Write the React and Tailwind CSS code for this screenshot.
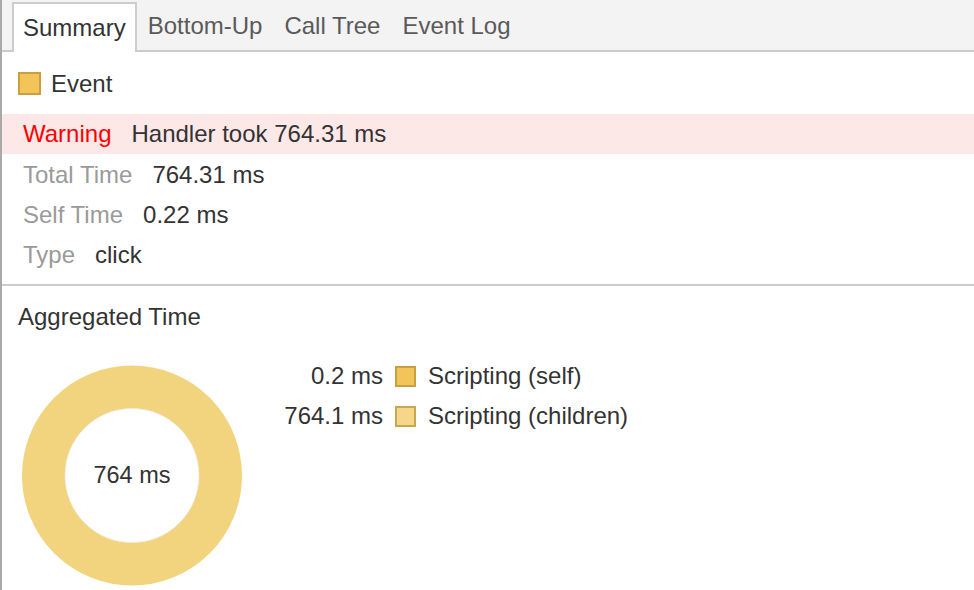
import React from "react";

const tabs = ["Summary", "Bottom-Up", "Call Tree", "Event Log"];

const details = [
  { label: "Total Time", value: "764.31 ms" },
  { label: "Self Time", value: "0.22 ms" },
  { label: "Type", value: "click" },
];

const legend = [
  { value: "0.2 ms", name: "Scripting (self)", fill: "bg-[#f2c45a]", border: "border-[#c9a03f]" },
  { value: "764.1 ms", name: "Scripting (children)", fill: "bg-[#f4d78a]", border: "border-[#c9a74e]" },
];

const Donut = () => (
  <svg width="220" height="221" viewBox="0 0 220 221" className="block">
    <circle cx="110" cy="110.5" r="88.5" fill="none" stroke="#f2d37e" strokeWidth="43" />
    <circle cx="110" cy="110.5" r="67" fill="#fff" stroke="#e8e2d0" strokeWidth="0.6" />
    <text
      x="110"
      y="112"
      textAnchor="middle"
      dominantBaseline="middle"
      fontSize="23.5"
      fill="#333"
      fontFamily="'Liberation Sans', Arial, sans-serif"
    >
      764 ms
    </text>
  </svg>
);

const App = () => {
  return (
    <div className="w-[974px] h-[590px] overflow-hidden bg-white border-l-2 border-[#a9a9a9] font-['Liberation_Sans',Arial,sans-serif] text-[24px] text-[#333]">
      {/* tab strip */}
      <div className="h-[52px] bg-[#f3f3f3] border-b-2 border-[#cbcbcb] flex items-end pl-[10px]">
        {tabs.map((t, i) =>
          i === 0 ? (
            <div
              key={t}
              className="h-[50px] -mb-[2px] bg-white border-2 border-b-0 border-[#cdcdcd] px-[9px] flex items-center text-[#333]"
            >
              {t}
            </div>
          ) : (
            <div key={t} className="h-[48px] px-[11px] flex items-center text-[#5a5a5a]">
              {t}
            </div>
          )
        )}
      </div>

      {/* event header */}
      <div className="h-[62px] flex items-center pl-[16px]">
        <span className="w-[23px] h-[23px] bg-[#f2c45a] border-2 border-[#c9a03f] mr-[10px]" />
        <span className="pt-[1px]">Event</span>
      </div>

      {/* warning */}
      <div className="h-[40px] bg-[#fde8e8] flex items-center pl-[21px]">
        <span className="text-[#ff0000] mr-[20px]">Warning</span>
        <span>Handler took 764.31 ms</span>
      </div>

      <div className="pb-[10px] border-b-2 border-[#cccccc]">
        {details.map((d) => (
          <div key={d.label} className="h-[40px] flex items-center pl-[21px] pt-[1px]">
            <span className="text-[#9a9a9a] mr-[20px]">{d.label}</span>
            <span>{d.value}</span>
          </div>
        ))}
      </div>

      {/* aggregated */}
      <div className="pt-[19px] pl-[16px]">
        <div className="leading-[24px]">Aggregated Time</div>
        <div className="mt-[27px] flex items-start">
          <div className="mt-[9px] ml-[4px]">
            <Donut />
          </div>
          <div className="ml-[41px] grid grid-cols-[100px_auto_auto] items-center">
            {legend.map((l) => (
              <React.Fragment key={l.name}>
                <span className="h-[40px] flex items-center justify-end">{l.value}</span>
                <span className={`ml-[12px] w-[21px] h-[21px] border-2 ${l.fill} ${l.border}`} />
                <span className="ml-[12px]">{l.name}</span>
              </React.Fragment>
            ))}
          </div>
        </div>
      </div>
    </div>
  );
};

export default App;
